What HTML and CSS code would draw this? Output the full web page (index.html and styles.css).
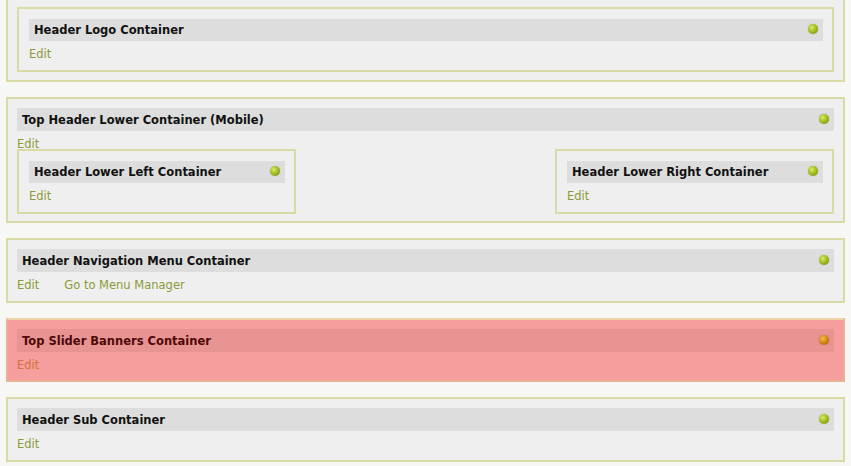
FILE: index.html
```html
<!DOCTYPE html>
<html>
<head>
<meta charset="utf-8">
<link rel="stylesheet" href="styles.css">
</head>
<body>
<div class="page">
  <div class="box first">
    <div class="box inner">
      <div class="bar"><span class="title">Header Logo Container</span><span class="dot"></span></div>
      <div class="links"><a class="link">Edit</a></div>
    </div>
  </div>

  <div class="box nested">
    <div class="bar"><span class="title">Top Header Lower Container (Mobile)</span><span class="dot"></span></div>
    <div class="links"><a class="link">Edit</a></div>
    <div class="pair">
      <div class="box inner half">
        <div class="bar"><span class="title">Header Lower Left Container</span><span class="dot"></span></div>
        <div class="links"><a class="link">Edit</a></div>
      </div>
      <div class="box inner half">
        <div class="bar"><span class="title">Header Lower Right Container</span><span class="dot"></span></div>
        <div class="links"><a class="link">Edit</a></div>
      </div>
    </div>
  </div>

  <div class="box">
    <div class="bar"><span class="title">Header Navigation Menu Container</span><span class="dot"></span></div>
    <div class="links"><a class="link">Edit</a><a class="link">Go to Menu Manager</a></div>
  </div>

  <div class="box alert">
    <div class="bar"><span class="title">Top Slider Banners Container</span><span class="dot warn"></span></div>
    <div class="links"><a class="link">Edit</a></div>
  </div>

  <div class="box">
    <div class="bar"><span class="title">Header Sub Container</span><span class="dot"></span></div>
    <div class="links"><a class="link">Edit</a></div>
  </div>
</div>
</body>
</html>
```

FILE: styles.css
```css
html, body {
  margin: 0;
  padding: 0;
  background: #f7f7f3;
  font-family: "DejaVu Sans", Verdana, sans-serif;
  font-size: 11.5px;
  overflow: hidden;
}

.page {
  display: flex;
  flex-direction: column;
  gap: 15px;
  padding: 0 6px;
}

.box {
  background: #efefef;
  border: 2px solid #dadaa6;
  padding: 9px 9px 8px 9px;
}

.box.first {
  margin-top: -4px;
  padding-top: 9px;
}

.box.nested {
  padding-bottom: 7px;
}

.box.inner {
  padding: 10px 9px 8px 10px;
}

.bar {
  display: flex;
  align-items: center;
  justify-content: space-between;
  height: 23px;
  padding: 0 5px 0 5px;
  background: #dcdddc;
}

.box.inner .bar {
  height: 22px;
}

.title {
  font-weight: bold;
  color: #111;
}

.dot {
  width: 10px;
  height: 10px;
  border-radius: 50%;
  margin-top: -2px;
  background: radial-gradient(circle at 38% 35%, #d9ec6a 0, #a8c424 40%, #7e9a12 80%, #6c8410 100%);
  box-shadow: 0 0 1px rgba(90, 110, 10, 0.6);
}

.dot.warn {
  background: radial-gradient(circle at 38% 35%, #f4c050 0, #d88a16 45%, #b06508 85%, #945404 100%);
  box-shadow: 0 0 1px rgba(140, 70, 10, 0.6);
}

.links {
  display: flex;
  gap: 25px;
  height: 16px;
  line-height: 16px;
  margin-top: 5px;
}

.link {
  color: #8c9a3a;
  text-decoration: none;
}

.pair {
  display: flex;
  justify-content: space-between;
  margin-top: -3px;
}

.box.half {
  width: 256px;
}

.box.alert {
  background: #f59e9d;
  border-color: #ebb094;
  border-top-color: #efd3a8;
  padding-bottom: 7px;
}

.box.alert .bar {
  background: #e79493;
}

.box.alert .title {
  color: #4e0808;
}

.box.alert .link {
  color: #d4733c;
}
```
